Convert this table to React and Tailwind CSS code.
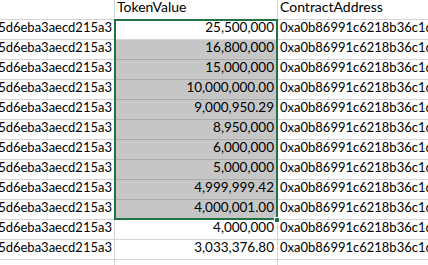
const rows = [
  '25,500,000',
  '16,800,000',
  '15,000,000',
  '10,000,000.00',
  '9,000,950.29',
  '8,950,000',
  '6,000,000',
  '5,000,000',
  '4,999,999.42',
  '4,000,001.00',
  '4,000,000',
  '3,033,376.80',
  null,
]

const HASH = '5d6eba3aecd215a3'
const ADDR = '0xa0b86991c6218b36c1d'

export default function App() {
  return (
    <div
      className="relative w-[428px] h-[265px] overflow-hidden bg-white text-black text-[13px] leading-none"
      style={{ fontFamily: 'Lato, "Open Sans", sans-serif' }}
    >
      <div className="grid grid-cols-[115px_163px_1fr]">
        {/* header */}
        <div className="h-[20px] border-r border-b border-[#d4d4d4]" />
        <div className="h-[20px] border-r border-b border-[#d4d4d4] flex items-end pb-[5px] pl-[2px] text-[14px]">TokenValue</div>
        <div className="h-[20px] border-b border-[#d4d4d4] flex items-end pb-[5px] pl-[2px] whitespace-nowrap text-[14px]">ContractAddress</div>

        {rows.map((v, i) => {
          const sel = i > 0 && i < 10
          const blank = v === null
          return [
            <div key={'a' + i} className="h-[20px] border-r border-b border-[#d4d4d4] flex items-end justify-end pb-[5px] pr-[2px] overflow-hidden whitespace-nowrap">
              {blank ? '' : HASH}
            </div>,
            <div
              key={'b' + i}
              className={`h-[20px] border-r border-b flex items-end justify-end pb-[5px] pr-[3px] text-[13.5px] ${
                sel ? 'bg-[#c6c6c6] border-[#ababab]' : 'border-[#d4d4d4]'
              }`}
            >
              {v}
            </div>,
            <div key={'c' + i} className="h-[20px] border-b border-[#d4d4d4] flex items-end pb-[5px] pl-[2px] overflow-hidden whitespace-nowrap">
              {blank ? '' : ADDR}
            </div>,
          ]
        })}
      </div>

      {/* selection outline */}
      <div className="absolute left-[114px] top-[19px] w-[164px] h-[201px] border-2 border-[#217346] pointer-events-none" />
      <div className="absolute left-[274px] top-[217px] w-[6px] h-[6px] bg-[#217346] border border-white" />
    </div>
  )
}
